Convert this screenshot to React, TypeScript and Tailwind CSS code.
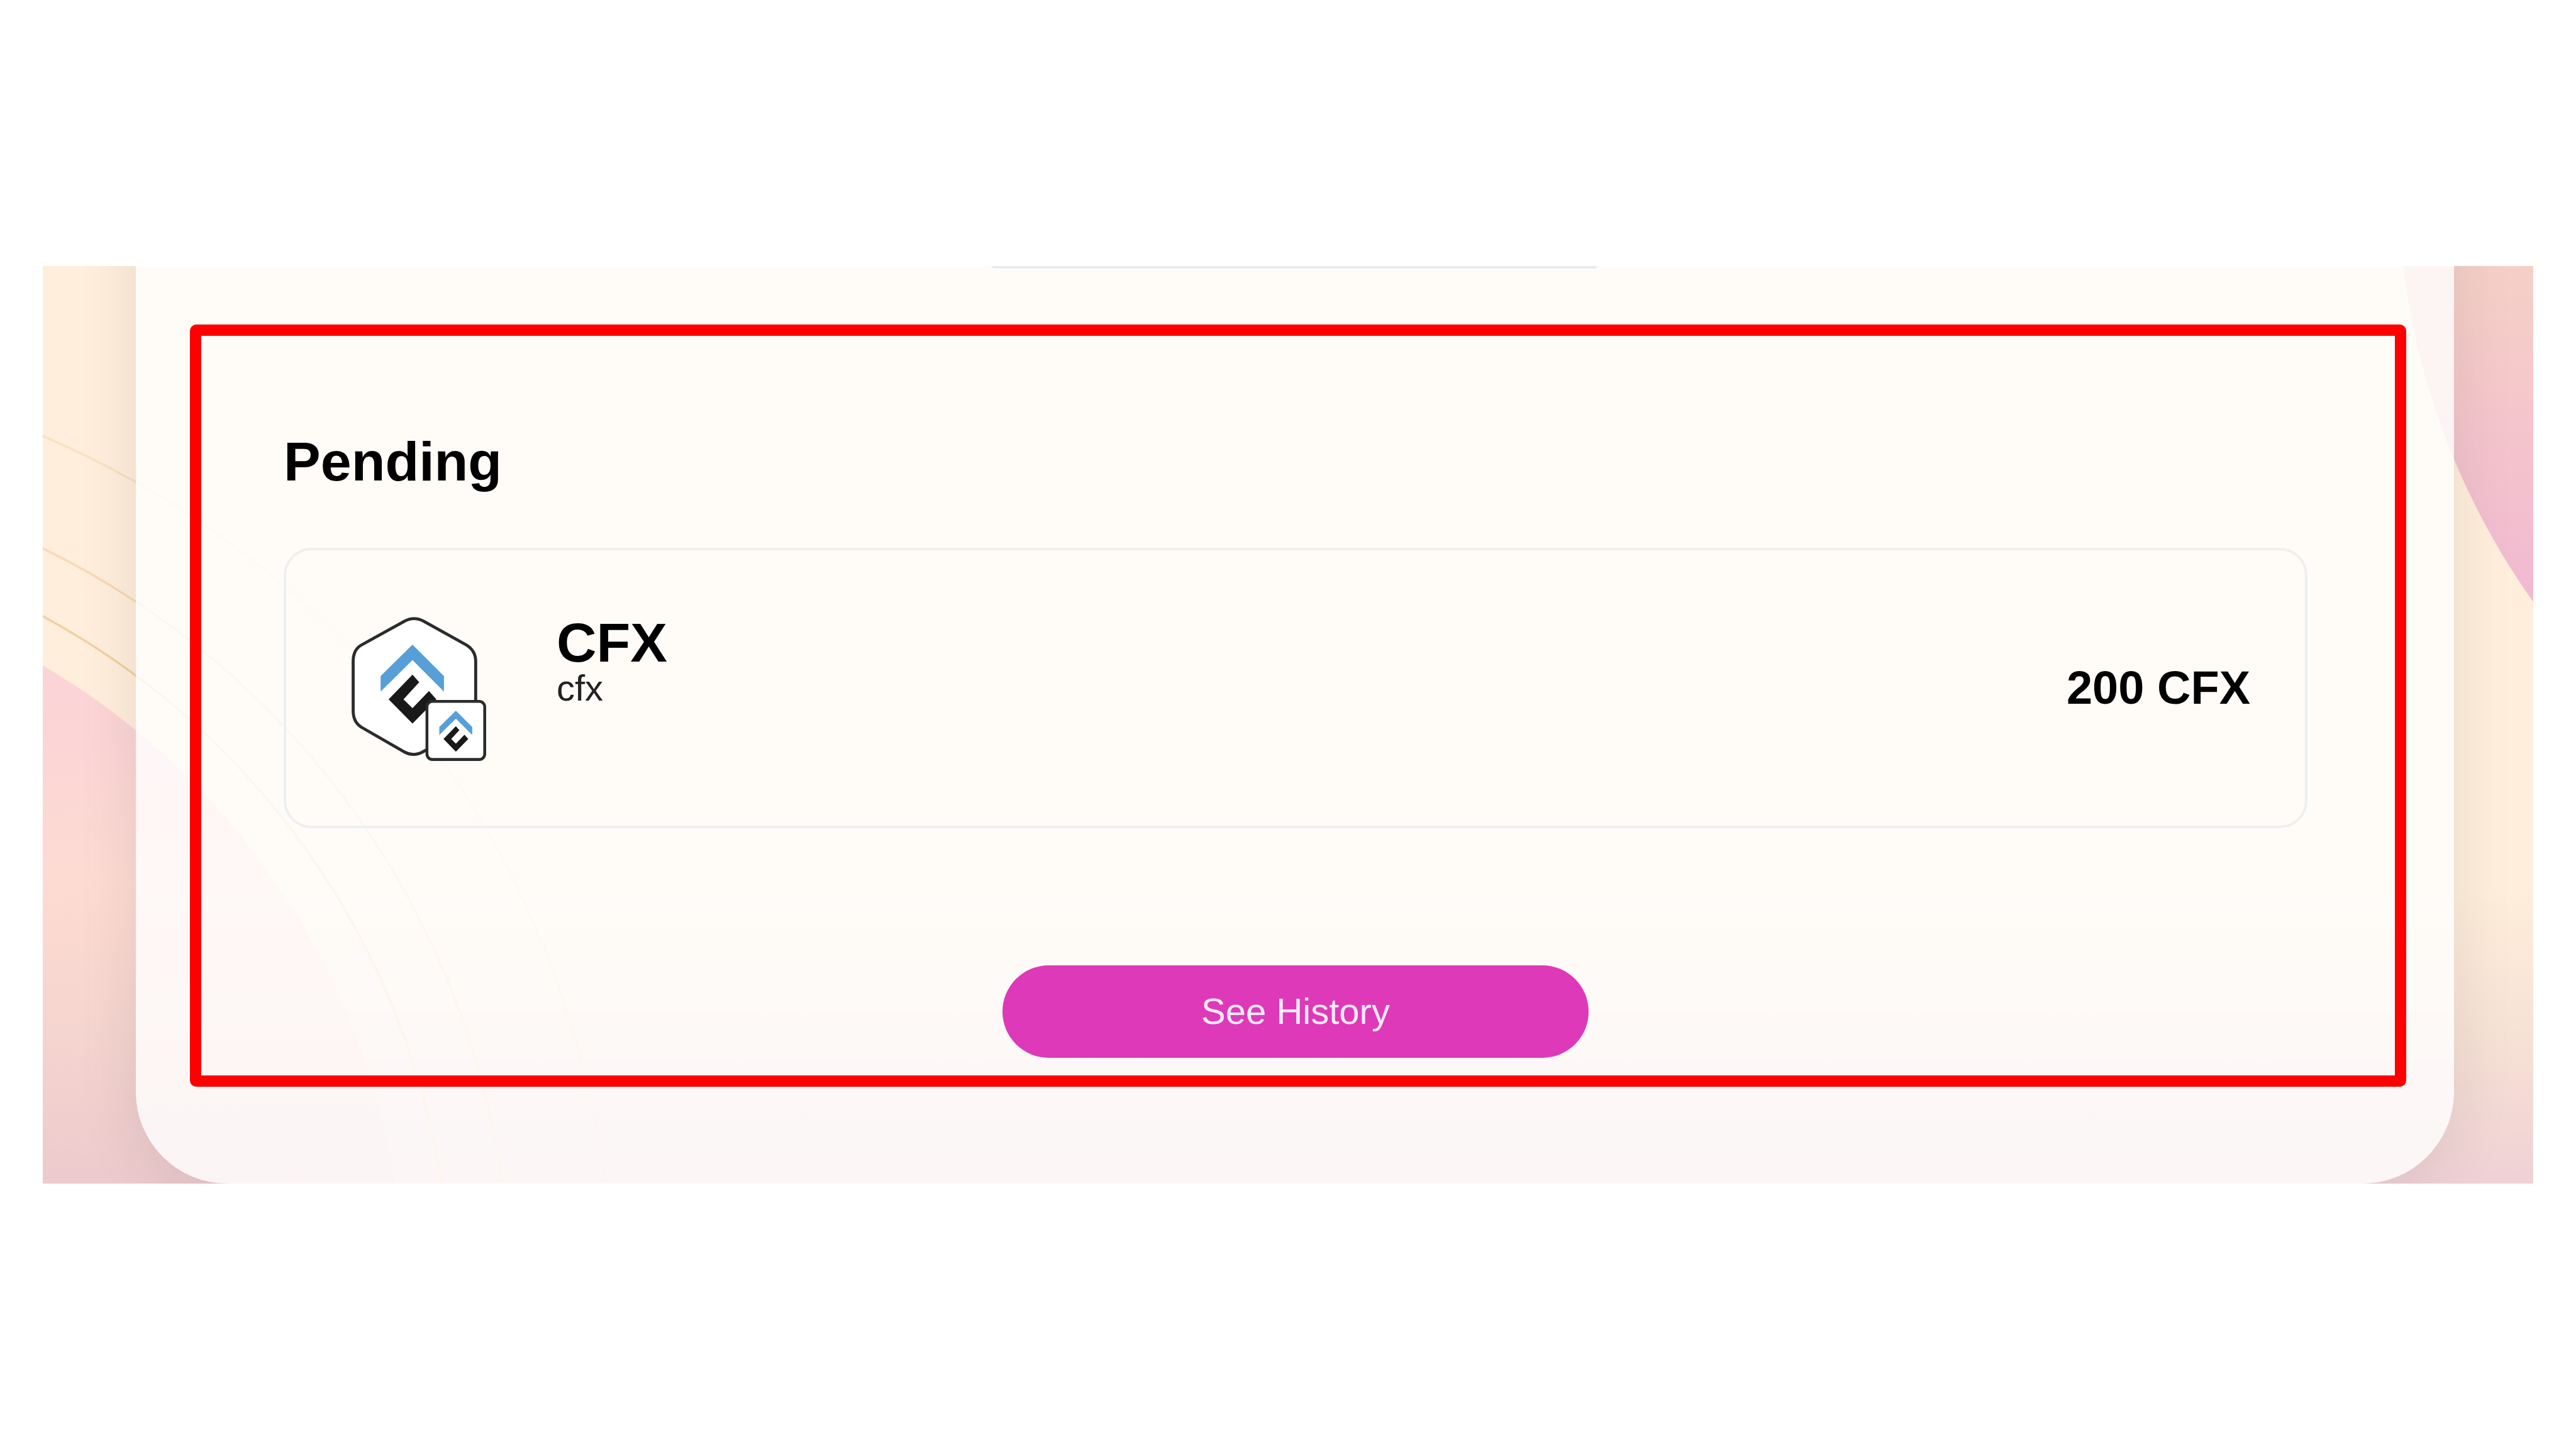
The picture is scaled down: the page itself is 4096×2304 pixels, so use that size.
function ConfluxMark() {
  return (
    <>
      <path d="M545 308 L765 528 V637 L545 416 L322 637 V528 Z" fill="#569fd8" />
      <path d="M545 518 L592 570 L482 690 L545 752 L660 632 L712 690 L545 860 L378 690 Z" fill="#191919" />
    </>
  );
}

function TokenLogo() {
  return (
    <svg viewBox="110 110 950 1020" className="h-[232px] w-[216px] shrink-0" role="img" aria-label="Conflux token">
      <path
        d="M490 143 Q555 108 622 143 L925 312 Q987 352 987 425 V775 Q987 850 925 885 L622 1055 Q555 1095 488 1058 L187 885 Q130 850 130 770 V425 Q130 345 185 312 Z"
        fill="#fff"
        stroke="#2b2b2b"
        strokeWidth="21"
      />
      <ConfluxMark />
      <rect x="646" y="705" width="404" height="406" rx="38" fill="#fff" stroke="#2b2b2b" strokeWidth="20" />
      <g transform="translate(565 609) scale(0.52)">
        <ConfluxMark />
      </g>
    </svg>
  );
}

function Backdrop() {
  return (
    <svg
      viewBox="100 620 5800 2137"
      preserveAspectRatio="none"
      aria-hidden="true"
      className="absolute inset-0 h-full w-full"
    >
      <defs>
        <linearGradient id="base" gradientUnits="userSpaceOnUse" x1="0" y1="620" x2="0" y2="2757">
          <stop offset="0" stopColor="#ffeedb" />
          <stop offset="0.68" stopColor="#ffeedb" />
          <stop offset="0.83" stopColor="#f7e2d5" />
          <stop offset="1" stopColor="#efd1d5" />
        </linearGradient>
        <linearGradient id="leftDisc" gradientUnits="userSpaceOnUse" x1="0" y1="1548" x2="0" y2="2757">
          <stop offset="0" stopColor="#fcd4d8" />
          <stop offset="0.15" stopColor="#fcd5d6" />
          <stop offset="0.42" stopColor="#fddbd2" />
          <stop offset="0.7" stopColor="#f5d5cf" />
          <stop offset="1" stopColor="#eccacd" />
        </linearGradient>
        <linearGradient id="rightDisc" gradientUnits="userSpaceOnUse" x1="0" y1="620" x2="0" y2="1401">
          <stop offset="0" stopColor="#f5d0c7" />
          <stop offset="0.35" stopColor="#f5c8ca" />
          <stop offset="1" stopColor="#f0b9d2" />
        </linearGradient>
      </defs>
      <rect x="100" y="620" width="5800" height="2137" fill="url(#base)" />
      <circle cx="-759" cy="3016" r="1699" fill="url(#leftDisc)" />
      <g fill="none" stroke="#f2d0a2" strokeWidth="5">
        <circle cx="-765" cy="3030" r="1814" />
        <circle cx="-753" cy="3021" r="1941" opacity="0.7" />
        <circle cx="-759" cy="3025" r="2185" opacity="0.45" />
      </g>
      <circle cx="7279" cy="418" r="1694" fill="url(#rightDisc)" />
    </svg>
  );
}

const pending = [{ symbol: "CFX", name: "cfx", amount: "200 CFX" }];

export default function App() {
  return (
    <main className="flex min-h-screen flex-col justify-center bg-white px-[68px] font-['Liberation_Sans',Arial,sans-serif] text-black">
      <div className="relative overflow-hidden">
        <Backdrop />
        <div className="relative -mt-[160px] mr-[126px] ml-[148px] rounded-b-[146px] bg-white/80 pt-[160px] pr-[76px] pb-[154px] pl-[86px] shadow-[0_16px_100px_rgba(0,0,0,0.09)]">
          <div className="pr-3">
            <div className="mx-auto h-1 w-[962px] rounded-b-sm bg-[#e9eaf0]" />
          </div>
          <section className="mt-[89px] rounded-[10px] border-[18px] border-[#ff0000] pt-[152px] pr-[139px] pb-7 pl-[131px]">
            <h2 className="text-[88px] leading-[96px] font-bold">Pending</h2>
            <ul className="mt-[89px]">
              {pending.map((item) => (
                <li
                  key={item.symbol}
                  className="flex h-[446px] items-center justify-between rounded-[44px] border-4 border-[#eeeff1] pr-[87px] pl-[102px]"
                >
                  <div className="flex items-start gap-[112px] pt-1">
                    <TokenLogo />
                    <div>
                      <h3 className="text-[88px] leading-[84px] font-bold">{item.symbol}</h3>
                      <p className="text-[58px] leading-[60px] text-[#222222]">{item.name}</p>
                    </div>
                  </div>
                  <p className="text-[74px] leading-[80px] font-bold">{item.amount}</p>
                </li>
              ))}
            </ul>
            <button
              type="button"
              className="mx-auto mt-[218px] block h-[147px] w-[932px] rounded-full bg-[#de39b9] text-[58px] leading-[64px] text-[#faecf8]"
            >
              See History
            </button>
          </section>
        </div>
      </div>
    </main>
  );
}
